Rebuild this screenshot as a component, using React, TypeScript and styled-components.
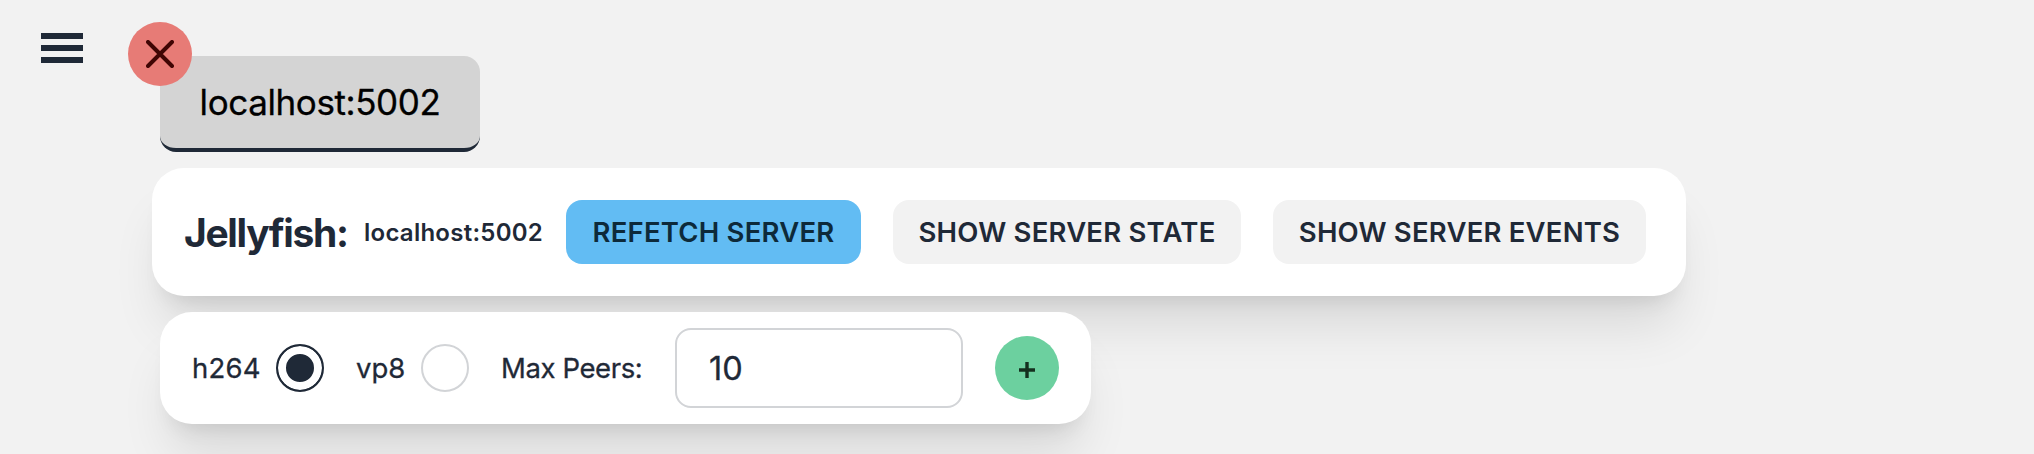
import React, { useState } from "react";
import styled, { createGlobalStyle, css } from "styled-components";

const ink = "#1f2937";

const GlobalStyle = createGlobalStyle`
  *, *::before, *::after { box-sizing: border-box; }
  body {
    margin: 0;
    background: #f2f2f2;
    color: ${ink};
    font-family: Inter, "Liberation Sans", sans-serif;
    overflow: hidden;
  }
  button, input { font: inherit; color: inherit; border: 0; margin: 0; padding: 0; }
`;

const Page = styled.div`
  display: flex;
  align-items: flex-start;
  height: 454px;
  overflow: hidden;
`;

const MenuButton = styled.button`
  display: flex;
  flex-direction: column;
  gap: 6px;
  width: 42px;
  margin: 33px 69px 0 41px;
  background: none;
`;

const MenuBar = styled.span`
  height: 6px;
  background: ${ink};
`;

const Content = styled.main`
  display: flex;
  flex-direction: column;
  align-items: flex-start;
`;

const ServerTab = styled.div`
  position: relative;
  display: flex;
  align-items: center;
  justify-content: center;
  width: 320px;
  height: 96px;
  margin: 56px 0 16px 8px;
  border-bottom: 4px solid ${ink};
  border-radius: 16px;
  background: #d4d4d4;
  color: #000;
`;

const TabLabel = styled.span`
  font-size: 35px;
  line-height: 48px;
  letter-spacing: -0.4px;
  -webkit-text-stroke: 0.3px currentColor;
  white-space: nowrap;
`;

const round = css`
  display: flex;
  align-items: center;
  justify-content: center;
  width: 64px;
  height: 64px;
  border-radius: 50%;
`;

const CloseButton = styled.button`
  ${round}
  position: absolute;
  left: -32px;
  top: -34px;
  background: #e77b76;
`;

const Card = styled.section`
  display: flex;
  align-items: center;
  border-radius: 32px;
  background: #fff;
  box-shadow: 0 40px 50px -10px rgba(0, 0, 0, 0.1), 0 16px 20px -12px rgba(0, 0, 0, 0.1);
`;

const ServerCard = styled(Card)`
  width: 1534px;
  height: 128px;
  padding: 0 40px 0 32px;
`;

const Title = styled.h2`
  width: 180px;
  margin: 0;
  font-size: 39px;
  font-weight: 700;
  letter-spacing: -1.35px;
  white-space: nowrap;
`;

const Host = styled.span`
  width: 202px;
  font-size: 24px;
  font-weight: 600;
  letter-spacing: 0.25px;
  white-space: nowrap;
`;

const Action = styled.button<{ $width: number; $primary?: boolean }>`
  width: ${(p) => p.$width}px;
  height: 64px;
  border-radius: 16px;
  background: ${(p) => (p.$primary ? "#62bcf3" : "#f2f2f2")};
  color: ${(p) => (p.$primary ? "#0d2a3a" : ink)};
  font-size: 27.5px;
  font-weight: 600;
  letter-spacing: 0.2px;
  text-transform: uppercase;
  white-space: nowrap;
  & + & { margin-left: 32px; }
`;

const RoomCard = styled(Card)`
  width: 931px;
  height: 112px;
  margin: 16px 0 0 8px;
  padding: 0 32px;
`;

const Field = styled.label<{ $width: number; $tracking?: number }>`
  display: flex;
  align-items: center;
  justify-content: space-between;
  width: ${(p) => p.$width}px;
  margin-right: 32px;
  font-size: 27.5px;
  letter-spacing: ${(p) => p.$tracking ?? 0}px;
  -webkit-text-stroke: 0.3px currentColor;
  white-space: nowrap;
`;

const Radio = styled.input`
  appearance: none;
  width: 48px;
  height: 48px;
  border: 2px solid #d2d4d7;
  border-radius: 50%;
  background: #fff;
  &:checked {
    border-color: ${ink};
    background: ${ink};
    box-shadow: 0 0 0 8px #fff inset;
  }
`;

const PeersInput = styled.input`
  width: 288px;
  height: 80px;
  padding: 0 32px;
  border: 2px solid #d2d4d7;
  border-radius: 16px;
  background: #fff;
  font-size: 32.5px;
  -webkit-text-stroke: 0.3px currentColor;
  outline: none;
`;

const AddButton = styled.button`
  ${round}
  margin-left: 32px;
  padding-top: 4px;
  background: #6cd09f;
  color: #14301f;
`;

export default function App() {
  const [codec, setCodec] = useState("h264");
  const [peers, setPeers] = useState("10");
  return (
    <>
      <GlobalStyle />
      <Page>
        <MenuButton aria-label="Menu">
          <MenuBar />
          <MenuBar />
          <MenuBar />
        </MenuButton>
        <Content>
          <ServerTab>
            <TabLabel>localhost:5002</TabLabel>
            <CloseButton aria-label="Close">
              <svg width="28" height="28" viewBox="0 0 28 28" fill="none" stroke="#400504" strokeWidth="4" strokeLinecap="round">
                <path d="M2 2 26 26M26 2 2 26" />
              </svg>
            </CloseButton>
          </ServerTab>
          <ServerCard>
            <Title>Jellyfish:</Title>
            <Host>localhost:5002</Host>
            <Action $width={295} $primary>Refetch server</Action>
            <Action $width={348}>Show server state</Action>
            <Action $width={373}>Show server events</Action>
          </ServerCard>
          <RoomCard>
            <Field $width={132} $tracking={0.2}>
              h264
              <Radio type="radio" name="codec" checked={codec === "h264"} onChange={() => setCodec("h264")} />
            </Field>
            <Field $width={113}>
              vp8
              <Radio type="radio" name="codec" checked={codec === "vp8"} onChange={() => setCodec("vp8")} />
            </Field>
            <Field $width={142} $tracking={-0.4}>Max Peers:</Field>
            <PeersInput value={peers} onChange={(e) => setPeers(e.target.value)} />
            <AddButton aria-label="Add room">
              <svg width="16" height="16" viewBox="0 0 16 16" stroke="currentColor" strokeWidth="3.4">
                <path d="M8 0V16M0 8H16" />
              </svg>
            </AddButton>
          </RoomCard>
        </Content>
      </Page>
    </>
  );
}
